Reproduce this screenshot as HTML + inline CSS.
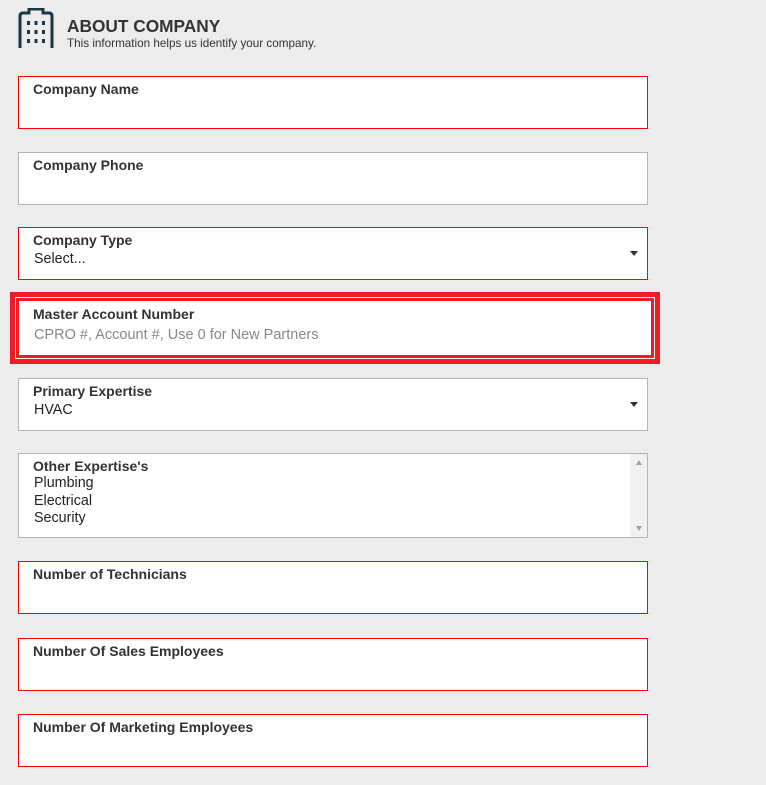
<!DOCTYPE html>
<html><head><style>
body{margin:0;background:#ececec;width:766px;height:785px;position:relative;font-family:"Liberation Sans",Arial,sans-serif;overflow:hidden}
.f{position:absolute;left:18px;width:628px;height:51px;background:#fff;border:1px solid #f00;box-sizing:content-box}
.g{border-color:#b4b4b4}
.l{position:absolute;left:14px;top:4px;font-weight:bold;font-size:14px;color:#333}
.v{position:absolute;left:15px;top:23px;font-size:14.3px;color:#222}
.arr{position:absolute;right:9px;top:23px;width:0;height:0;border-left:4px solid transparent;border-right:4px solid transparent;border-top:5px solid #333}
</style></head><body>
<svg style="position:absolute;left:18px;top:8px" width="36" height="42" viewBox="0 0 36 42">
<path d="M2 40 V8 Q2 5 5 5 H11 V1 H25 V5 H31 Q34 5 34 8 V40" fill="none" stroke="#1c3646" stroke-width="3"/>
<g fill="#1c3646"><rect x="9" y="13" width="3" height="4"/><rect x="16.5" y="13" width="3" height="4"/><rect x="24" y="13" width="3" height="4"/>
<rect x="9" y="22" width="3" height="4"/><rect x="16.5" y="22" width="3" height="4"/><rect x="24" y="22" width="3" height="4"/>
<rect x="9" y="31" width="3" height="4"/><rect x="16.5" y="31" width="3" height="4"/><rect x="24" y="31" width="3" height="4"/></g>
</svg>
<div style="position:absolute;left:67px;top:16px;font-weight:bold;font-size:17.3px;color:#333">ABOUT COMPANY</div>
<div style="position:absolute;left:67px;top:37px;font-size:11.7px;color:#333">This information helps us identify your company.</div>

<div class="f" style="top:76px"><div class="l">Company Name</div></div>
<div class="f g" style="top:152px"><div class="l">Company Phone</div></div>
<div class="f" style="top:227px"><div class="l">Company Type</div><div class="v">Select...</div><div class="arr"></div></div>
<div style="position:absolute;left:10px;top:292px;width:650px;height:72px;box-sizing:border-box;border:5px solid #ee1c25;background:#f2f2f2">
<div style="position:absolute;left:1px;top:1px;right:1px;bottom:1px;border:3px solid #ee1c25;background:#fff">
<div class="l" style="left:14px;top:5px">Master Account Number</div><div class="v" style="color:#888;top:26px;font-size:14.5px">CPRO #, Account #, Use 0 for New Partners</div></div></div>
<div class="f g" style="top:378px"><div class="l">Primary Expertise</div><div class="v">HVAC</div><div class="arr"></div></div>
<div class="f g" style="top:453px;height:83px"><div class="l">Other Expertise's</div>
<div style="position:absolute;left:15px;top:21px;font-size:14.3px;line-height:17.5px;color:#222">Plumbing<br>Electrical<br>Security</div>
<div style="position:absolute;right:0;top:0;width:17px;height:83px;background:#f1f1f1"></div>
<div style="position:absolute;right:5px;top:6px;border-left:3.5px solid transparent;border-right:3.5px solid transparent;border-bottom:5px solid #a3a3a3"></div>
<div style="position:absolute;right:5px;bottom:6px;border-left:3.5px solid transparent;border-right:3.5px solid transparent;border-top:5px solid #a3a3a3"></div>
</div>
<div class="f" style="top:561px"><div class="l">Number of Technicians</div></div>
<div class="f" style="top:638px"><div class="l">Number Of Sales Employees</div></div>
<div class="f" style="top:714px"><div class="l">Number Of Marketing Employees</div></div>
</body></html>
